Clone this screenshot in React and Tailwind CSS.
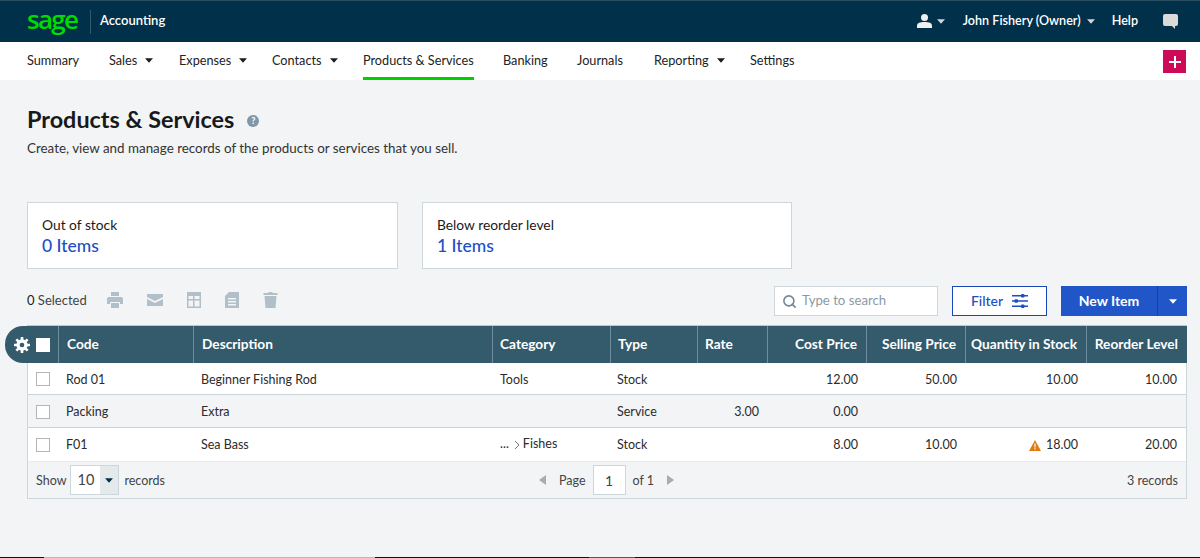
import { Search } from "lucide-react";

const Caret = ({ className = "" }) => (
  <svg className={className} width="8" height="5" viewBox="0 0 9 5" fill="currentColor">
    <path d="M0 0h9L4.5 5z" />
  </svg>
);

const navItems = [
  { label: "Summary", w: "w-[82px]" },
  { label: "Sales", caret: true, w: "w-[70px]" },
  { label: "Expenses", caret: true, w: "w-[93px]" },
  { label: "Contacts", caret: true, w: "w-[91px]" },
  { label: "Products & Services", active: true, w: "w-[140px]" },
  { label: "Banking", w: "w-[74px]" },
  { label: "Journals", w: "w-[77px]" },
  { label: "Reporting", caret: true, w: "w-[96px]" },
  { label: "Settings", w: "w-[60px]" },
];

const rows = [
  ["Rod 01", "Beginner Fishing Rod", "Tools", "Stock", "", "12.00", "50.00", "10.00", "10.00"],
  ["Packing", "Extra", "", "Service", "3.00", "0.00", "", "", ""],
  ["F01", "Sea Bass", "fishes", "Stock", "", "8.00", "10.00", "warn", "20.00"],
];

const cols = [
  "w-[167px]",
  "w-[299px]",
  "w-[118px]",
  "w-[87px]",
  "w-[70px]",
  "w-[99px]",
  "w-[99px]",
  "w-[121px]",
  "w-[100px]",
];

const headPad = ["pl-[40px]", "pl-[8px]", "pl-[7px]", "pl-[7px]", "pl-[7px]", "", "", "", ""];
const cellPad = ["pl-[38px]", "pl-[7px]", "pl-[7px]", "pl-[6px]", "", "", "", "", ""];
const rowHeights = ["h-[32px]", "h-[33px]", "h-[34px]"];

const headers = ["Code", "Description", "Category", "Type", "Rate", "Cost Price", "Selling Price", "Quantity in Stock", "Reorder Level"];

const Toolbar = () => (
  <div className="flex items-center gap-[24px] pb-[2px] text-[#b0bfc8]">
    <svg width="16" height="16" viewBox="0 0 16 16" fill="currentColor">
      <path d="M4 0h8v4H4zM2 5h12a2 2 0 0 1 2 2v5h-3v-2H3v2H0V7a2 2 0 0 1 2-2zM4 11h8v5H4z" />
    </svg>
    <svg width="16" height="12" viewBox="0 0 16 12" fill="currentColor">
      <path d="M0 0h16v3L8 7 0 3zM0 5l8 4 8-4v7H0z" />
    </svg>
    <svg width="14" height="16" viewBox="0 0 14 16" fill="currentColor" fillRule="evenodd">
      <path d="M0 0h14v16H0zM1.500 4v3h4.500V4zm6 0v3h5V4zM1.500 8.500v6h4.500v-6zm6 0v6h5v-6z" />
    </svg>
    <svg width="14" height="16" viewBox="0 0 14 16" fill="currentColor" fillRule="evenodd">
      <path d="M4 0h10v16H0V4zM3 6v1.500h8V6zm0 3v1.500h8V9zm0 3v1.500h8V12z" />
    </svg>
    <svg width="15" height="16" viewBox="0 0 14 16" fill="currentColor">
      <path d="M5 0h4v1h5v2H0V1h5zM1 4h12l-1 12H2z" />
    </svg>
  </div>
);

const App = () => {
  return (
    <div className="flex h-[558px] flex-col overflow-hidden bg-[#f2f4f6] font-['Lato','Open_Sans',sans-serif] text-[12.5px] text-[#2b2b2b]">
      <header className="flex h-[42px] shrink-0 items-center border-t border-[#2b4f60] bg-[#00304a] pr-[22px] pl-[27px] text-white">
        <span className="w-[49px] pb-[6px] font-['Open_Sans',sans-serif] text-[26px] leading-none font-semibold tracking-[-1.7px] text-[#00dc00]">
          sage
        </span>
        <span className="ml-[14px] h-[24px] w-px bg-[#33596d]" />
        <span className="ml-[9px] pb-px text-[13px] font-semibold">Accounting</span>
        <div className="ml-auto flex items-center text-[12.6px] font-semibold">
          <svg width="15" height="14" viewBox="0 0 15 14" fill="#f0f0f0">
            <circle cx="7.500" cy="3.500" r="3.500" />
            <path d="M0 14v-2.500C0 9 3 8 7.500 8S15 9 15 11.500V14z" />
          </svg>
          <Caret className="ml-[5px] text-[#cfd6da]" />
          <span className="ml-[18px] pb-px">John Fishery (Owner)</span>
          <Caret className="ml-[6px] text-[#cfd6da]" />
          <span className="ml-[17px] pb-px">Help</span>
          <svg className="ml-[25px]" width="15" height="15" viewBox="0 0 15 15" fill="#dcd9d9">
            <path d="M2 0h11a2 2 0 0 1 2 2v8a2 2 0 0 1-2 2h-1v3l-3-3H2a2 2 0 0 1-2-2V2a2 2 0 0 1 2-2z" />
          </svg>
        </div>
      </header>

      <nav className="flex h-[38px] shrink-0 items-stretch bg-white pr-[14px] pl-[27px] text-[12.7px] text-[#222]">
        {navItems.map((item) => (
          <div key={item.label} className={`${item.w} flex items-stretch`}>
            <div
              className={`flex h-full items-center pb-px ${
                item.active ? "border-b-[3px] border-[#00d000] pt-[3px]" : ""
              }`}
            >
              {item.label}
              {item.caret && <Caret className="mb-px ml-[8px] text-[#1d1d1d]" />}
            </div>
          </div>
        ))}
        <button className="mt-[8px] ml-auto flex h-[23px] w-[23px] items-center justify-center bg-[#cc0a58]">
          <svg width="12" height="12" viewBox="0 0 12 12" fill="#fff">
            <path d="M5 0h2v5h5v2H7v5H5V7H0V5h5z" />
          </svg>
        </button>
      </nav>

      <main className="flex-1 pr-[13px] pl-[27px]">
        <div className="flex items-center pt-[25px]">
          <h1 className="text-[23.4px] leading-[28px] font-bold text-[#191919]">Products &amp; Services</h1>
          <span className="mt-[3px] ml-[13px] flex h-[12px] w-[12px] items-center justify-center rounded-full bg-[#7f97a6] text-[9px] leading-none font-black text-white">
            ?
          </span>
        </div>
        <p className="mt-[6px] text-[13.4px] leading-[18px] text-[#333]">
          Create, view and manage records of the products or services that you sell.
        </p>

        <div className="mt-[45px] flex gap-[24px]">
          <div className="h-[67px] w-[371px] border border-[#ccd6db] bg-white px-[14px] pt-[13px]">
            <div className="text-[13.8px] leading-[18px] text-[#1a1a1a]">Out of stock</div>
            <div className="text-[17.500px] leading-[24px] font-medium text-[#1c4fc4]">0 Items</div>
          </div>
          <div className="h-[67px] w-[370px] border border-[#ccd6db] bg-white px-[14px] pt-[13px]">
            <div className="text-[13.8px] leading-[18px] text-[#1a1a1a]">Below reorder level</div>
            <div className="text-[17.500px] leading-[24px] font-medium text-[#1c4fc4]">1 Items</div>
          </div>
        </div>

        <div className="mt-[16px] flex h-[32px] items-center">
          <span className="w-[80px] text-[13px] text-[#444]">
            <span className="text-[#1d1d1d]">0</span> Selected
          </span>
          <Toolbar />
          <div className="ml-auto flex h-[30px] w-[164px] items-center gap-[5px] border border-[#ccd6db] bg-white pl-[7px] text-[#8a9aa5]">
            <Search size={15} strokeWidth={2.5} className="text-[#6f8796]" />
            <span className="text-[13.2px]">Type to search</span>
          </div>
          <button className="ml-[14px] flex h-[30px] w-[95px] items-center justify-center gap-[9px] border border-[#1c45b8] bg-white pb-[2px] text-[14px] font-medium text-[#1c4fc4]">
            Filter
            <svg width="16" height="14" viewBox="0 0 16 14" fill="#1c4fc4" className="mt-[2px]">
              <path d="M0 1h16v1.600H0zM0 6.200h16v1.600H0zM0 11.400h16V13H0z" />
              <rect x="9" y="0" width="3.500" height="3.600" rx="1" />
              <rect x="2.500" y="5.200" width="3.500" height="3.600" rx="1" />
              <rect x="9" y="10.400" width="3.500" height="3.600" rx="1" />
            </svg>
          </button>
          <div className="ml-[14px] flex h-[30px] w-[126px] bg-[#2156c8] text-white">
            <button className="flex-1 border-r border-[#17439f] pb-[2px] text-[14px] font-bold">New Item</button>
            <button className="flex w-[29px] items-center justify-center">
              <Caret />
            </button>
          </div>
        </div>

        <div className="relative mt-[8px]">
          {/* gear + select all pill, hangs off the left of the table */}
          <div className="absolute top-[1px] -left-[22px] z-10 flex h-[37px] w-[54px] items-center rounded-l-[18px] border-r border-[#6f8d9b] bg-[#335b6c] pl-[9px]">
            <svg width="16" height="16" viewBox="0 0 24 24" fill="none" stroke="#fff" strokeWidth="5">
              <circle cx="12" cy="12" r="6" />
              <path d="M12 0v5M12 19v5M0 12h5M19 12h5M3.500 3.500l3.500 3.500M17 17l3.500 3.500M3.500 20.500L7 17M17 7l3.500-3.500" strokeWidth="4" />
            </svg>
            <span className="ml-[6px] h-[14px] w-[14px] bg-white" />
          </div>
          <div className="w-[1160px] border-x border-b border-[#ccd6db]">
            <div className="-mx-px flex h-[38px] border-t border-[#b9c8cf] bg-[#335b6c] text-[13.7px] font-bold whitespace-nowrap text-white">
              {headers.map((h, i) => (
                <div
                  key={h}
                  className={`${cols[i]} flex items-center ${headPad[i]} ${i > 4 ? "justify-end pr-[9px]" : ""} ${
                    i < 8 ? "border-r border-[#6f8d9b]" : ""
                  } ${i === 8 ? "flex-1" : ""}`}
                >
                  {h}
                </div>
              ))}
            </div>
            {rows.map((row, r) => (
              <div
                key={row[0]}
                className={`flex ${rowHeights[r]} ${r === 2 ? "border-b border-[#e8ecef]" : "border-b border-[#c9d3d8] pt-px"} ${
                  r === 1 ? "bg-[#f2f4f6]" : "bg-white"
                }`}
              >
                {row.map((cell, i) => (
                  <div
                    key={i}
                    className={`${cols[i]} flex items-center pt-[2px] ${cellPad[i]} ${i === 0 ? "relative -mr-px" : ""} ${
                      i > 3 ? "justify-end pr-[9px]" : ""
                    } ${i === 8 ? "flex-1" : ""}`}
                  >
                    {i === 0 && (
                      <span className="absolute left-[8px] -mt-[2px] h-[14px] w-[14px] border border-[#b5b5b5] bg-white" />
                    )}
                    {cell === "fishes" ? (
                      <span className="flex items-center pb-[2px]">
                        ...
                        <svg className="mr-[3px] ml-[5px]" width="6" height="10" viewBox="0 0 6 10" fill="none" stroke="#777">
                          <path d="M1 1l4 4-4 4" />
                        </svg>
                        Fishes
                      </span>
                    ) : cell === "warn" ? (
                      <span className="flex items-center gap-[5px]">
                        <svg width="12" height="11" viewBox="0 0 12 11">
                          <path d="M6 0l6 11H0z" fill="#e07a10" />
                          <path d="M5.400 3.500h1.200v4H5.400zM5.400 8.200h1.200v1.300H5.400z" fill="#fff" />
                        </svg>
                        18.00
                      </span>
                    ) : (
                      cell
                    )}
                  </div>
                ))}
              </div>
            ))}
            <div className="relative flex h-[36px] items-center pr-[8px] pl-[8px] text-[#444]">
              <span className="pt-[3px]">Show</span>
              <div className="ml-[4px] flex h-[30px] w-[49px] border border-[#ccd6db]">
                <span className="flex w-[29px] items-center justify-center bg-white text-[14.5px]">10</span>
                <span className="flex flex-1 items-center justify-center bg-[#e4e9ec] text-[#00304a]">
                  <Caret />
                </span>
              </div>
              <span className="ml-[5px] pt-[3px]">records</span>
              <div className="absolute left-[511px] flex items-center">
                <svg width="7" height="10" viewBox="0 0 7 10" fill="#a3adb3">
                  <path d="M7 0v10L0 5z" />
                </svg>
                <span className="ml-[13px] pt-[3px]">Page</span>
                <span className="ml-[7px] flex h-[30px] w-[33px] items-center justify-center border border-[#ccd6db] bg-white text-[14px]">
                  1
                </span>
                <span className="ml-[7px] pt-[3px]">of 1</span>
                <svg className="ml-[13px]" width="7" height="10" viewBox="0 0 7 10" fill="#a3adb3">
                  <path d="M0 0v10l7-5z" />
                </svg>
              </div>
              <span className="ml-auto pt-[3px]">3 records</span>
            </div>
          </div>
        </div>
      </main>

      {/* dark strip along the window's bottom edge */}
      <div className="flex h-px shrink-0 bg-[#111]">
        <span className="ml-[44px] w-[331px] bg-[#b8b8b8]" />
        <span className="ml-[214px] w-[46px] bg-[#555]" />
      </div>
    </div>
  );
};

export default App;
